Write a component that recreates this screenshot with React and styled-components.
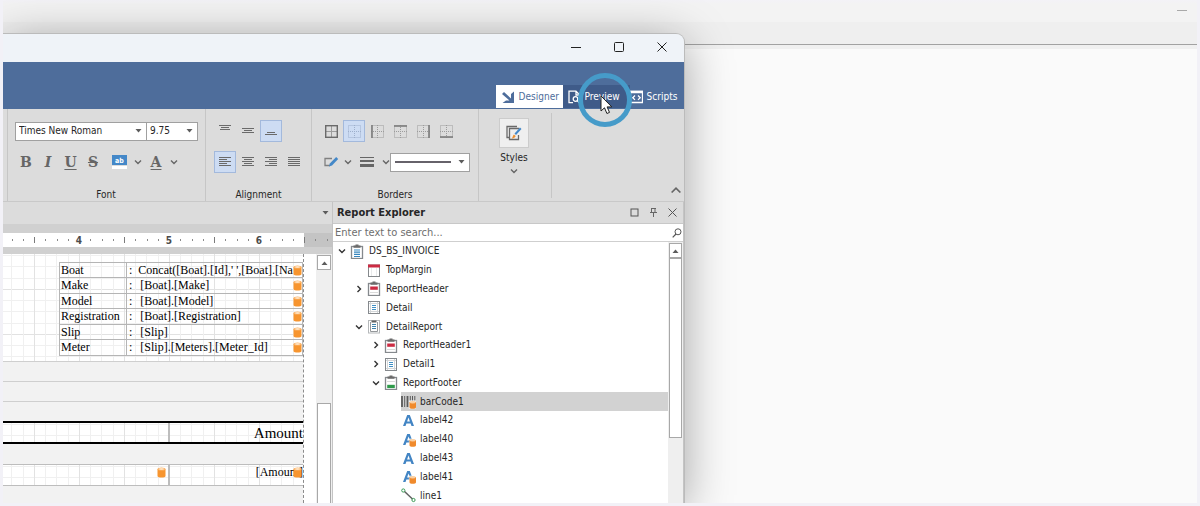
import React from "react";
import styled, { createGlobalStyle, css } from "styled-components";

const GlobalStyle = createGlobalStyle`
  *, *::before, *::after { box-sizing: border-box; }
  body {
    margin: 0;
    background: #f2f1f7;
    color: #262626;
    font: 10px/14px "DejaVu Sans Condensed", "Noto Sans", sans-serif;
  }
  button, select, input { font: inherit; color: inherit; margin: 0; padding: 0; border: 0; background: none; }
  svg { display: block; flex: none; }
  ul { list-style: none; margin: 0; padding: 0; }
`;

/* ---------- desktop behind the designer ---------- */

const Desktop = styled.div`
  position: relative;
  height: 100vh;
  padding: 0 3px 3px;
`;

const Backdrop = styled.main`
  position: relative;
  height: 100%;
  overflow: hidden;
  display: flex;
  flex-direction: column;
  background: #fafafa;
`;

const BackTitle = styled.header`
  height: 22px;
  flex: none;
  padding: 4px 10px 0 0;
  display: flex;
  justify-content: flex-end;
  background: linear-gradient(#f3f2f7, #f3f3f3 4px);
`;

const BackMinimize = styled.button`
  width: 10px;
  height: 7px;
  border-bottom: 1px solid #a9a9a9;
`;

const BackBar = styled.div`
  height: 27px;
  flex: none;
  border-bottom: 4px solid #f0f0f0;
  background: #efefef;
  box-shadow: inset 0 -1px #a2a2a2;
`;

const Window = styled.section`
  position: absolute;
  left: 0;
  top: 34px;
  bottom: 0;
  width: 57%;
  display: flex;
  flex-direction: column;
  background: #dcdcdc;
  border-radius: 0 8px 0 0;
  box-shadow: 0 0 0 1px #bbbbbb, 0 8px 48px rgba(0, 0, 0, 0.36);
`;

const TitleBar = styled.header`
  height: 28px;
  flex: none;
  display: flex;
  justify-content: flex-end;
  background: #eff3f8;
  border-radius: 0 8px 0 0;
`;

const CaptionButton = styled.button`
  width: 43px;
  height: 26px;
  display: grid;
  place-items: center;
`;

const ModeBar = styled.nav`
  height: 47px;
  flex: none;
  display: flex;
  justify-content: flex-end;
  align-items: flex-end;
  padding-bottom: 1px;
  background: #4e6d9b;
`;

const ModeTab = styled.button`
  position: relative;
  height: 23px;
  width: ${(p) => p.$width};
  padding-left: ${(p) => (p.$flush ? "0" : "5px")};
  display: flex;
  align-items: center;
  gap: 4px;
  color: ${(p) => (p.$active ? "#4e6d9b" : "#fff")};
  background: ${(p) => (p.$active ? "#fff" : p.$hover ? "#3f5b89" : "transparent")};
`;

const ClickRing = styled.span`
  position: absolute;
  left: 15px;
  top: -12px;
  width: 54px;
  height: 54px;
  border: 5px solid #469bc9;
  border-radius: 50%;
  z-index: 2;
  pointer-events: none;
`;

const Pointer = styled.svg`
  position: absolute;
  left: 17px;
  top: 17px;
`;

/* ---------- ribbon ---------- */

const Ribbon = styled.div`
  height: 93px;
  flex: none;
  display: flex;
  padding-left: 4px;
  border-bottom: 1px solid #c9c9c9;
`;

const Group = styled.section`
  width: ${(p) => p.$width};
  padding: 11px 0 0 ${(p) => (p.$inset ? "7px" : "8px")};
  border-left: 1px solid #c6c6c6;
  display: flex;
  flex-direction: column;
  gap: 9px;
`;

const GroupLabel = styled.h2`
  margin: auto 0 0 -8px;
  font-size: 10px;
  font-weight: 400;
  line-height: 12px;
  text-align: center;
`;

const Tools = styled.div`
  height: 22px;
  display: flex;
  align-items: center;
  gap: ${(p) => p.$gap || "0"};
`;

const ToolButton = styled.button`
  width: ${(p) => p.$width || "22px"};
  height: 22px;
  display: grid;
  place-items: center;
  color: #666;
  ${(p) =>
    p.$on &&
    css`
      background: #cddcf3;
      box-shadow: inset 0 0 0 1px #a3b9dc;
    `}
`;

const Letter = styled.span`
  font: ${(p) => (p.$italic ? "italic" : "normal")} bold 14px/18px "DejaVu Serif", serif;
  text-decoration: ${(p) => p.$line || "none"};
  text-decoration-thickness: 1px;
  text-underline-offset: 2px;
`;

const Combo = styled.span`
  position: relative;
  width: ${(p) => p.$width};
  height: 19px;
  margin-left: ${(p) => (p.$joined ? "-1px" : "0")};
  border: 1px solid #a0a0a0;
  background: #fff;
  display: flex;
  align-items: center;
  select {
    appearance: none;
    width: 100%;
    height: 100%;
    padding-left: 3px;
    outline: 0;
  }
  svg { position: absolute; right: 4px; pointer-events: none; }
`;

const StylesGroup = styled.section`
  width: 73px;
  padding: 9px 2px 0 0;
  border-left: 1px solid #c6c6c6;
  display: flex;
  flex-direction: column;
  align-items: center;
`;

const StylesButton = styled.button`
  display: flex;
  flex-direction: column;
  align-items: center;
  gap: 3px;
  line-height: 13px;
`;

const StylesTile = styled.span`
  width: 30px;
  height: 30px;
  display: grid;
  place-items: center;
  background: #efefef;
  border: 1px solid #cccccc;
`;

const RibbonEnd = styled.div`
  flex: 1;
  margin: 4px 0 3px;
  padding: 0 3px 0 0;
  border-left: 1px solid #c6c6c6;
  display: flex;
  justify-content: flex-end;
  align-items: flex-end;
`;

/* ---------- work area ---------- */

const Work = styled.div`
  flex: 1;
  min-height: 0;
  display: flex;
`;

const Design = styled.section`
  flex: 0 0 329px;
  display: flex;
  flex-direction: column;
  background: #d0d0d0;
  overflow: hidden;
`;

const DocTabs = styled.div`
  height: 22px;
  flex: none;
  padding-right: 3px;
  display: flex;
  align-items: center;
  justify-content: flex-end;
  background: #dcdcdc;
`;

const RulerRow = styled.div`
  margin: 9px 0 7px;
  background: #c4c4c4;
  flex: none;
`;

const Surface = styled.div`
  flex: 1;
  min-height: 0;
  display: flex;
  background: #fff;
`;

const Page = styled.div`
  width: 301px;
  display: flex;
  flex-direction: column;
  border-right: 1px dashed #8c8c8c;
  font: 12px/15px "Liberation Serif", serif;
  color: #000;
`;

const grid = css`
  background-color: #fff;
  background-image:
    repeating-linear-gradient(90deg, #e2e2e2 0 1px, transparent 1px 11px, #f0f0f0 11px 12px, transparent 12px 22px, #f0f0f0 22px 23px, transparent 23px 34px, #f0f0f0 34px 35px, transparent 35px 45px),
    repeating-linear-gradient(#e2e2e2 0 1px, transparent 1px 11px, #f0f0f0 11px 12px, transparent 12px 22px, #f0f0f0 22px 23px, transparent 23px 34px, #f0f0f0 34px 35px, transparent 35px 45px);
  background-size: 45px 45px;
  background-position: 31px 35px;
`;

const DetailBand = styled.div`
  ${grid}
  height: 107px;
  flex: none;
  padding: 8px 0 0 56px;
`;

const EmptyBand = styled.div`
  height: 20px;
  flex: ${(p) => (p.$fill ? "1" : "none")};
  background: #f2f2f2;
  border-top: ${(p) => (p.$flat ? "0" : "1px solid #cfcfcf")};
`;

const Fields = styled.table`
  width: 244px;
  border-collapse: collapse;
  table-layout: fixed;
  col:first-child { width: 67px; }
  tr { height: 15px; }
  tr:nth-child(even) { height: 16px; }
  th, td {
    padding: 0;
    border: 1px solid #b5b5b5;
    font-weight: 400;
    text-align: left;
    white-space: nowrap;
    line-height: 13px;
  }
  th { padding-left: 1px; }
`;

const FieldValue = styled.div`
  display: flex;
  align-items: center;
  gap: ${(p) => (p.$wide ? "6px" : "8px")};
  padding-left: 2px;
  svg { margin-left: auto; }
`;

const ValueText = styled.span`
  margin-right: -20px;
`;

const BandRow = styled.div`
  ${grid}
  height: ${(p) => p.$height};
  flex: none;
  display: flex;
  border: solid ${(p) => (p.$heavy ? "#000" : "#bdbdbd")};
  border-width: ${(p) => (p.$heavy ? "2px 0" : "1px 0")};
`;

const BandCell = styled.div`
  display: flex;
  align-items: ${(p) => (p.$large ? "flex-end" : "flex-start")};
  justify-content: flex-end;
  font-size: ${(p) => (p.$large ? "15px" : "12px")};
  line-height: ${(p) => (p.$large ? "17px" : "15px")};
  &:first-child { width: 167px; padding-right: 2px; border-right: 2px solid #bdbdbd; }
  &:last-child { flex: 1; }
  svg { margin-top: 2px; }
  span + svg { margin-left: -10px; margin-right: 1px; }
`;

const Scroll = styled.div`
  width: ${(p) => p.$width};
  margin-left: auto;
  flex: none;
  display: flex;
  flex-direction: column;
  background: #efefef;
  padding: 1px 1px 0;
`;

const ScrollUp = styled.button`
  height: 15px;
  flex: none;
  border: 1px solid #a8a8a8;
  background: #fff;
  display: grid;
  place-items: center;
`;

const Thumb = styled.div`
  flex: ${(p) => p.$flex};
  margin-top: ${(p) => p.$top};
  border: 1px solid #a8a8a8;
  border-bottom-width: ${(p) => (p.$open ? "0" : "1px")};
  background: #fff;
`;

/* ---------- report explorer ---------- */

const Explorer = styled.aside`
  flex: 1;
  min-width: 0;
  display: flex;
  flex-direction: column;
  background: #fff;
  border-left: 1px solid #c4c4c4;
  border-right: 1px solid #c4c4c4;
`;

const PanelHead = styled.header`
  height: 22px;
  flex: none;
  padding: 0 5px 0 4px;
  display: flex;
  align-items: center;
  gap: 9px;
  background: #dcdcdc;
  border-bottom: 1px solid #c8c8c8;
  h2 { flex: 1; margin: 0; font-size: 11px; line-height: 20px; }
`;

const PanelButton = styled.button`
  width: 10px;
  height: 16px;
  display: grid;
  place-items: center;
`;

const Search = styled.label`
  height: 18px;
  flex: none;
  padding: 0 1px 0 2px;
  display: flex;
  align-items: center;
  border-bottom: 1px solid #cfcfcf;
  input { flex: 1; min-width: 0; outline: 0; font-size: 11px; }
  input::placeholder { color: #6e6e6e; opacity: 1; }
`;

const TreeArea = styled.div`
  flex: 1;
  min-height: 0;
  display: flex;
`;

const Tree = styled.ul`
  flex: 1;
  min-width: 0;
  max-height: 263px;
  margin-bottom: -2px;
  display: grid;
  grid-template-rows: repeat(14, minmax(18px, 1fr));
`;

const TreeItem = styled.li`
  display: flex;
  align-items: center;
  margin-left: ${(p) => 1 + p.$level * 17}px;
  ${(p) =>
    p.$selected &&
    css`
      background: linear-gradient(90deg, transparent 16px, #d2d2d2 16px);
    `}
`;

const Toggle = styled.button`
  width: 16px;
  height: 16px;
  display: grid;
  place-items: center;
`;

const ItemIcon = styled.span`
  width: 15px;
  margin-right: 4px;
`;

/* ---------- drawings ---------- */

const Caret = ({ up }) => (
  <svg width="7" height="4" viewBox="0 0 7 4" fill="#5c5c5c">
    <path d={up ? "M.5 4 3.5.5 6.5 4z" : "M.5 0h6L3.5 3.500z"} />
  </svg>
);

const Chevron = ({ dir = "down", color = "#666", size = 8 }) => (
  <svg width={size} height={size} viewBox="0 0 8 8" fill="none" stroke={color} strokeWidth="1.4">
    <path d={{ down: "M1 2.5 4 5.5 7 2.5", up: "M0.5 6 4 2.5 7.5 6", right: "M2.5 1 5.5 4 2.5 7" }[dir]} />
  </svg>
);

const Cylinder = () => (
  <svg width="9" height="11" viewBox="0 0 9 11">
    <path d="M0.5 2v7c0 2 8 2 8 0V2z" fill="#f7952f" />
    <ellipse cx="4.5" cy="2" rx="4" ry="1.6" fill="#fbb469" />
    <ellipse cx="4.5" cy="2" rx="2.6" ry="0.8" fill="#fff0dc" />
  </svg>
);

const Lines = ({ rows }) => (
  <svg width="14" height="14" viewBox="0 0 14 14" stroke="#6a6a6a">
    {rows.map(([x1, x2, y]) => (
      <path key={y} d={`M${x1} ${y + 0.5}H${x2}`} />
    ))}
  </svg>
);

const BorderIcon = ({ side, blue }) => {
  const dot = blue ? "#9eb0cc" : "#9c9c9c";
  const sides = { left: "M1 0v13", right: "M12 0v13", top: "M0 1h13", bottom: "M0 12h13" };
  return (
    <svg width="13" height="13" viewBox="0 0 13 13" fill="none">
      <path d="M.5.5h12v12H.5zM6.5 0v13M0 6.5h13" stroke={dot} strokeDasharray={side === "all" ? "none" : "1 1"} />
      {side === "all" && <rect x=".7" y=".7" width="11.6" height="11.6" stroke="#6a6a6a" strokeWidth="1.4" />}
      {sides[side] && <path d={sides[side]} stroke="#7c7c7c" strokeWidth="1.600" />}
    </svg>
  );
};

const Clipboard = ({ children }) => (
  <>
    <rect x="1.5" y="2.5" width="11" height="12" fill="#fff" stroke="#85898d" strokeWidth="1.3" />
    <path d="M3.500 1.500h2V.5h3v1h2v2.300h-7z" fill="#6b6b6b" />
    {children}
  </>
);

const treeIcons = {
  report: (
    <Clipboard>
      <path d="M4 6h6M4 8.200h6M4 10.400h6M4 12.500h6" stroke="#3585bd" strokeWidth="1.200" />
    </Clipboard>
  ),
  margin: (
    <>
      <rect x="1.5" y="2" width="11" height="11.5" fill="#fff" stroke="#85898c" />
      <path d="M4.5 5v8M9.5 5v8" stroke="#e8eaeb" />
      <path d="M1 1.5h12v3H1z" fill="#cc2b43" />
    </>
  ),
  header: (
    <Clipboard>
      <path d="M3.2 5.500h7.600v3.300H3.200z" fill="#cc2b43" />
      <path d="M3 11.500h8" stroke="#dadada" />
    </Clipboard>
  ),
  detail: (
    <>
      <rect x="1.5" y="1.5" width="11" height="12" fill="#fff" stroke="#85898d" />
      <path d="M3.500 2v11M10.500 2v11M2 3.500h10M2 11.500h10" stroke="#d3d6d8" />
      <path d="M5 5.500h4M5 7.500h4M5 9.500h4" stroke="#3f8fc4" />
    </>
  ),
  detailReport: (
    <>
      <rect x="1.5" y="1.5" width="11" height="12.5" fill="#fff" stroke="#b5b8ba" />
      <path d="M3.500 3v9.500h7V3" fill="none" stroke="#95989b" />
      <path d="M4.500 1.500h5V3.500h-5z" fill="#606060" />
      <path d="M5 5.500h4M5 7.500h4M5 9.500h4" stroke="#3f83ad" />
    </>
  ),
  footer: (
    <Clipboard>
      <path d="M3.200 9.800h7.600v3.300H3.200z" fill="#2f9a4b" />
      <path d="M3 6.500h8" stroke="#dadada" />
    </Clipboard>
  ),
  barcode: (
    <>
      <path d="M1 2v11M6.500 2v11" stroke="#5a5a5a" strokeWidth="1.800" />
      <path d="M3.700 2v11M9.300 2v4.500M11.500 2v4.500M13.800 2v4.500" stroke="#5a5a5a" strokeWidth="1" />
    </>
  ),
  label: (
    <path
      d="M2 13 6.200 2h2.600L13 13h-2.500l-.9-2.500H5.400L4.500 13zM6.100 8.600h2.800L7.500 4.400z"
      fill="#4385c4"
      fillRule="evenodd"
    />
  ),
  line: (
    <>
      <path d="m3 3 9 8.500" stroke="#606060" strokeWidth="1.500" />
      <circle cx="2.300" cy="2.500" r="1.600" fill="#fff" stroke="#3b9b57" />
      <circle cx="12.500" cy="12" r="1.600" fill="#fff" stroke="#3b9b57" />
    </>
  ),
};

const TreeIcon = ({ kind, bound }) => (
  <svg width="15" height="15" viewBox="0 0 15 15">
    {treeIcons[kind]}
    {bound && (
      <>
        <path d="M7.800 6.500h7.200V15H7.800z" fill="#fff" opacity="0.600" />
        <path d="M8.500 8v5.300c0 2 6.500 2 6.500 0V8z" fill="#f08a2c" />
        <ellipse cx="11.750" cy="8.200" rx="3" ry="1.300" fill="#fbd0a2" />
      </>
    )}
  </svg>
);

const Ruler = () => {
  const ticks = Array.from({ length: 29 }, (_, i) => {
    const step = i - 2;
    return { x: Math.round(31 + step * 11.25), half: step % 8 === 0, inch: (step + 8) % 8 === 4 };
  });
  return (
    <svg width="329" height="14" aria-label="Ruler in inches">
      <rect width="301" height="14" fill="#fff" />
      {ticks.map((t, i) =>
        t.inch ? null : t.half ? (
          <path key={i} d={`M${t.x + 0.5} 4v6`} stroke="#7b7b7b" />
        ) : (
          <rect key={i} x={t.x} y="6" width="1" height="2" fill="#8a8a8a" />
        )
      )}
      {[4, 5, 6].map((n) => (
        <text key={n} x={76 + (n - 4) * 90} y="11" textAnchor="middle" fontSize="10" fontWeight="bold" fill="#4b4b4b">
          {n}
        </text>
      ))}
    </svg>
  );
};

/* ---------- data ---------- */

const fields = [
  ["Boat", "Concat([Boat].[Id],' ',[Boat].[Na"],
  ["Make", "[Boat].[Make]"],
  ["Model", "[Boat].[Model]"],
  ["Registration", "[Boat].[Registration]"],
  ["Slip", "[Slip]"],
  ["Meter", "[Slip].[Meters].[Meter_Id]"],
];

const nodes = [
  { name: "DS_BS_INVOICE", kind: "report", level: 0, open: true },
  { name: "TopMargin", kind: "margin", level: 1 },
  { name: "ReportHeader", kind: "header", level: 1, open: false },
  { name: "Detail", kind: "detail", level: 1 },
  { name: "DetailReport", kind: "detailReport", level: 1, open: true },
  { name: "ReportHeader1", kind: "header", level: 2, open: false },
  { name: "Detail1", kind: "detail", level: 2, open: false },
  { name: "ReportFooter", kind: "footer", level: 2, open: true },
  { name: "barCode1", kind: "barcode", level: 3, bound: true, selected: true },
  { name: "label42", kind: "label", level: 3 },
  { name: "label40", kind: "label", level: 3, bound: true },
  { name: "label43", kind: "label", level: 3 },
  { name: "label41", kind: "label", level: 3, bound: true },
  { name: "line1", kind: "line", level: 3 },
];

const vertical = [
  ["Align top", [[1, 13, 1], [3, 11, 3], [2, 12, 5]]],
  ["Align middle", [[1, 13, 4], [3, 11, 6], [1, 13, 8]]],
  ["Align bottom", [[3, 11, 8], [1, 13, 10]]],
];

const horizontal = [
  ["Align left", [[1, 13, 2], [1, 9, 4], [1, 13, 6], [1, 9, 8], [1, 13, 10]]],
  ["Center", [[1, 13, 2], [3, 11, 4], [1, 13, 6], [3, 11, 8], [1, 13, 10]]],
  ["Align right", [[1, 13, 2], [5, 13, 4], [1, 13, 6], [5, 13, 8], [1, 13, 10]]],
  ["Justify", [[1, 13, 2], [1, 13, 4], [1, 13, 6], [1, 13, 8], [1, 13, 10]]],
];

const RibbonBar = () => (
  <Ribbon>
    <Group $width="198px" $inset>
      <Tools>
        <Combo $width="132px">
          <select aria-label="Font name"><option>Times New Roman</option></select>
          <Caret />
        </Combo>
        <Combo $width="52px" $joined>
          <select aria-label="Font size"><option>9.75</option></select>
          <Caret />
        </Combo>
      </Tools>
      <Tools>
        <ToolButton aria-label="Bold"><Letter>B</Letter></ToolButton>
        <ToolButton aria-label="Italic"><Letter $italic>I</Letter></ToolButton>
        <ToolButton aria-label="Underline" $width="23px"><Letter $line="underline">U</Letter></ToolButton>
        <ToolButton aria-label="Strikethrough"><Letter $line="line-through">S</Letter></ToolButton>
        <ToolButton aria-label="Highlight color" $width="30px">
          <svg width="15" height="14" viewBox="0 0 15 14">
            <rect width="15" height="10" fill="#4488c8" />
            <rect y="11" width="15" height="3" fill="#fff" />
            <text x="7.5" y="7.5" textAnchor="middle" fontSize="7" fontWeight="bold" fill="#fff">ab</text>
          </svg>
        </ToolButton>
        <ToolButton aria-label="Highlight options" $width="8px"><Chevron /></ToolButton>
        <ToolButton aria-label="Font color" $width="28px"><Letter $line="underline">A</Letter></ToolButton>
        <ToolButton aria-label="Font color options" $width="8px"><Chevron /></ToolButton>
      </Tools>
      <GroupLabel>Font</GroupLabel>
    </Group>
    <Group $width="106px">
      <Tools $gap="1px">
        {vertical.map(([name, rows], i) => (
          <ToolButton key={name} aria-label={name} $on={i === 2}><Lines rows={rows} /></ToolButton>
        ))}
      </Tools>
      <Tools $gap="1px">
        {horizontal.map(([name, rows], i) => (
          <ToolButton key={name} aria-label={name} $on={i === 0}><Lines rows={rows} /></ToolButton>
        ))}
      </Tools>
      <GroupLabel>Alignment</GroupLabel>
    </Group>
    <Group $width="167px">
      <Tools $gap="1px">
        {["all", "none", "left", "top", "right", "bottom"].map((s) => (
          <ToolButton key={s} aria-label={`Borders: ${s}`} $on={s === "none"}>
            <BorderIcon side={s} blue={s === "none"} />
          </ToolButton>
        ))}
      </Tools>
      <Tools>
        <ToolButton aria-label="Border color" $width="23px">
          <svg width="15" height="12" viewBox="0 0 15 12" fill="none">
            <path d="M8 2.500H1v7h5" stroke="#808080" strokeWidth="1.300" />
            <path d="m5 10.500.8-3L12.200 1l2 2L8 9.500z" fill="#4488c8" />
          </svg>
        </ToolButton>
        <ToolButton aria-label="Border color options" $width="10px"><Chevron /></ToolButton>
        <ToolButton aria-label="Border width" $width="28px">
          <svg width="14" height="12" viewBox="0 0 14 12" stroke="#666">
            <path d="M0 1.500h14" /><path d="M0 5h14" strokeWidth="2" /><path d="M0 9.500h14" strokeWidth="3" />
          </svg>
        </ToolButton>
        <ToolButton aria-label="Border width options" $width="9px"><Chevron /></ToolButton>
        <Combo $width="80px">
          <select aria-label="Line style"><option aria-label="Solid" /></select>
          <svg width="70" height="4" viewBox="0 0 70 4">
            <path d="M0 2h56" stroke="#66626a" strokeWidth="2" /><path d="M63.500 0h6l-3 3.500z" fill="#5c5c5c" />
          </svg>
        </Combo>
      </Tools>
      <GroupLabel>Borders</GroupLabel>
    </Group>
    <StylesGroup>
      <StylesButton>
        <StylesTile>
          <svg width="16" height="16" viewBox="0 0 16 16" fill="none">
            <path d="M11 1.500H1v11h2" stroke="#6a6a6a" strokeWidth="1.300" />
            <path d="M12.500 4V3.500h-9v11h9V10" stroke="#6a6a6a" strokeWidth="1.300" />
            <path d="m8.500 8.500 5.500-6 1.500 1.500-5.500 6z" fill="#4488c8" />
            <path d="M5.500 13.500c1.500-.5.8-3 2.500-4l1.700 1.600c-.5 2-2.700 2.700-4.200 2.400z" fill="#ee9132" />
          </svg>
        </StylesTile>
        Styles
        <Chevron />
      </StylesButton>
    </StylesGroup>
    <RibbonEnd>
      <PanelButton aria-label="Collapse ribbon"><Chevron dir="up" size={10} /></PanelButton>
    </RibbonEnd>
  </Ribbon>
);

const DesignArea = () => (
  <Design aria-label="Report design">
    <DocTabs><Caret /></DocTabs>
    <RulerRow><Ruler /></RulerRow>
    <Surface>
      <Page>
        <DetailBand>
          <Fields>
            <colgroup><col /><col /></colgroup>
            <tbody>
              {fields.map(([name, value], i) => (
                <tr key={name}>
                  <th scope="row">{name}</th>
                  <td>
                    <FieldValue $wide={i === 0}>
                      <span>:</span>
                      <ValueText>{value}</ValueText>
                      <Cylinder />
                    </FieldValue>
                  </td>
                </tr>
              ))}
            </tbody>
          </Fields>
        </DetailBand>
        <EmptyBand />
        <EmptyBand />
        <EmptyBand />
        <BandRow $heavy $height="23px">
          <BandCell />
          <BandCell $large>Amount</BandCell>
        </BandRow>
        <EmptyBand $flat />
        <BandRow $height="22px">
          <BandCell><Cylinder /></BandCell>
          <BandCell><span>[Amount]</span><Cylinder /></BandCell>
        </BandRow>
        <EmptyBand $flat $fill />
      </Page>
      <Scroll $width="16px">
        <ScrollUp aria-label="Scroll up"><Caret up /></ScrollUp>
        <Thumb $flex="1" $top="133px" $open />
      </Scroll>
    </Surface>
  </Design>
);

const ReportExplorer = () => (
  <Explorer>
    <PanelHead>
      <h2>Report Explorer</h2>
      <PanelButton aria-label="Maximize panel">
        <svg width="9" height="9"><rect x="1" y="1" width="7" height="7" fill="none" stroke="#555" /></svg>
      </PanelButton>
      <PanelButton aria-label="Pin panel">
        <svg width="9" height="9" fill="none" stroke="#666"><path d="M2 .5h5M2.500.5v4M6 .5v4M1 4.500h7M4.500 4.500V9" /></svg>
      </PanelButton>
      <PanelButton aria-label="Close panel">
        <svg width="9" height="9" stroke="#555"><path d="m.5.5 8 8M8.500.5l-8 8" /></svg>
      </PanelButton>
    </PanelHead>
    <Search>
      <input type="text" aria-label="Search report items" placeholder="Enter text to search..." />
      <svg width="10" height="10" fill="none" stroke="#555"><circle cx="6" cy="3.800" r="3" /><path d="M4 6 .7 9.300" strokeWidth="1.200" /></svg>
    </Search>
    <TreeArea>
      <Tree role="tree">
        {nodes.map((n) => (
          <TreeItem key={n.name} role="treeitem" aria-selected={!!n.selected} $level={n.level} $selected={n.selected}>
            {n.open === undefined ? (
              <Toggle as="span" />
            ) : (
              <Toggle aria-label={`${n.open ? "Collapse" : "Expand"} ${n.name}`}>
                <Chevron dir={n.open ? "down" : "right"} color="#333" />
              </Toggle>
            )}
            <ItemIcon><TreeIcon kind={n.kind} bound={n.bound} /></ItemIcon>
            {n.name}
          </TreeItem>
        ))}
      </Tree>
      <Scroll $width="15px">
        <ScrollUp aria-label="Scroll up"><Caret up /></ScrollUp>
        <Thumb $flex="0 0 180px" $top="0" />
      </Scroll>
    </TreeArea>
  </Explorer>
);

export default function App() {
  return (
    <Desktop>
      <GlobalStyle />
      <Backdrop>
        <BackTitle><BackMinimize aria-label="Minimize" /></BackTitle>
        <BackBar />
        <Window>
          <TitleBar>
            <CaptionButton aria-label="Minimize window">
              <svg width="10" height="10"><path d="M0 5.500h10" stroke="#222" /></svg>
            </CaptionButton>
            <CaptionButton aria-label="Maximize window">
              <svg width="10" height="10"><rect x=".5" y=".5" width="9" height="9" rx="1" fill="none" stroke="#222" /></svg>
            </CaptionButton>
            <CaptionButton aria-label="Close window">
              <svg width="10" height="10"><path d="m.5.5 9 9M9.500.5l-9 9" stroke="#222" /></svg>
            </CaptionButton>
          </TitleBar>
          <ModeBar>
            <ModeTab $width="67px" $active>
              <svg width="14" height="14" viewBox="0 0 14 14">
                <path d="M13 1.500V13H1.500L5 10.500h3.500L1 4l2-2 7 6.500V4z" fill="#4e6d9b" />
              </svg>
              Designer
            </ModeTab>
            <ModeTab $width="67px" $hover>
              <svg width="13" height="14" viewBox="0 0 13 14" fill="none" stroke="#fff" strokeWidth="1.300">
                <path d="M5 12.700H1V1.200h7l3.500 3.500v2M8 1v4h3.500" />
                <circle cx="7.500" cy="9" r="2.300" /><path d="m9.300 10.800 2.300 2.300" />
              </svg>
              Preview
              <ClickRing>
                <Pointer width="13" height="20" viewBox="0 0 13 20">
                  <path d="M1 1v15l3.500-3.200 2.400 5.700 2.600-1.100-2.400-5.500h4.700z" fill="#fff" stroke="#222" />
                </Pointer>
              </ClickRing>
            </ModeTab>
            <ModeTab $width="54px" $flush>
              <svg width="13" height="14" viewBox="0 0 13 14" fill="none" stroke="#fff">
                <path d="M.5 1.500h12v11H.5z" strokeWidth="1.300" /><path d="M0 2h13" strokeWidth="2.500" />
                <path d="M5 5.500 2.800 7.700 5 9.900M8 5.500l2.200 2.200L8 9.900" strokeWidth="1.300" />
              </svg>
              Scripts
            </ModeTab>
          </ModeBar>
          <RibbonBar />
          <Work>
            <DesignArea />
            <ReportExplorer />
          </Work>
        </Window>
      </Backdrop>
    </Desktop>
  );
}
